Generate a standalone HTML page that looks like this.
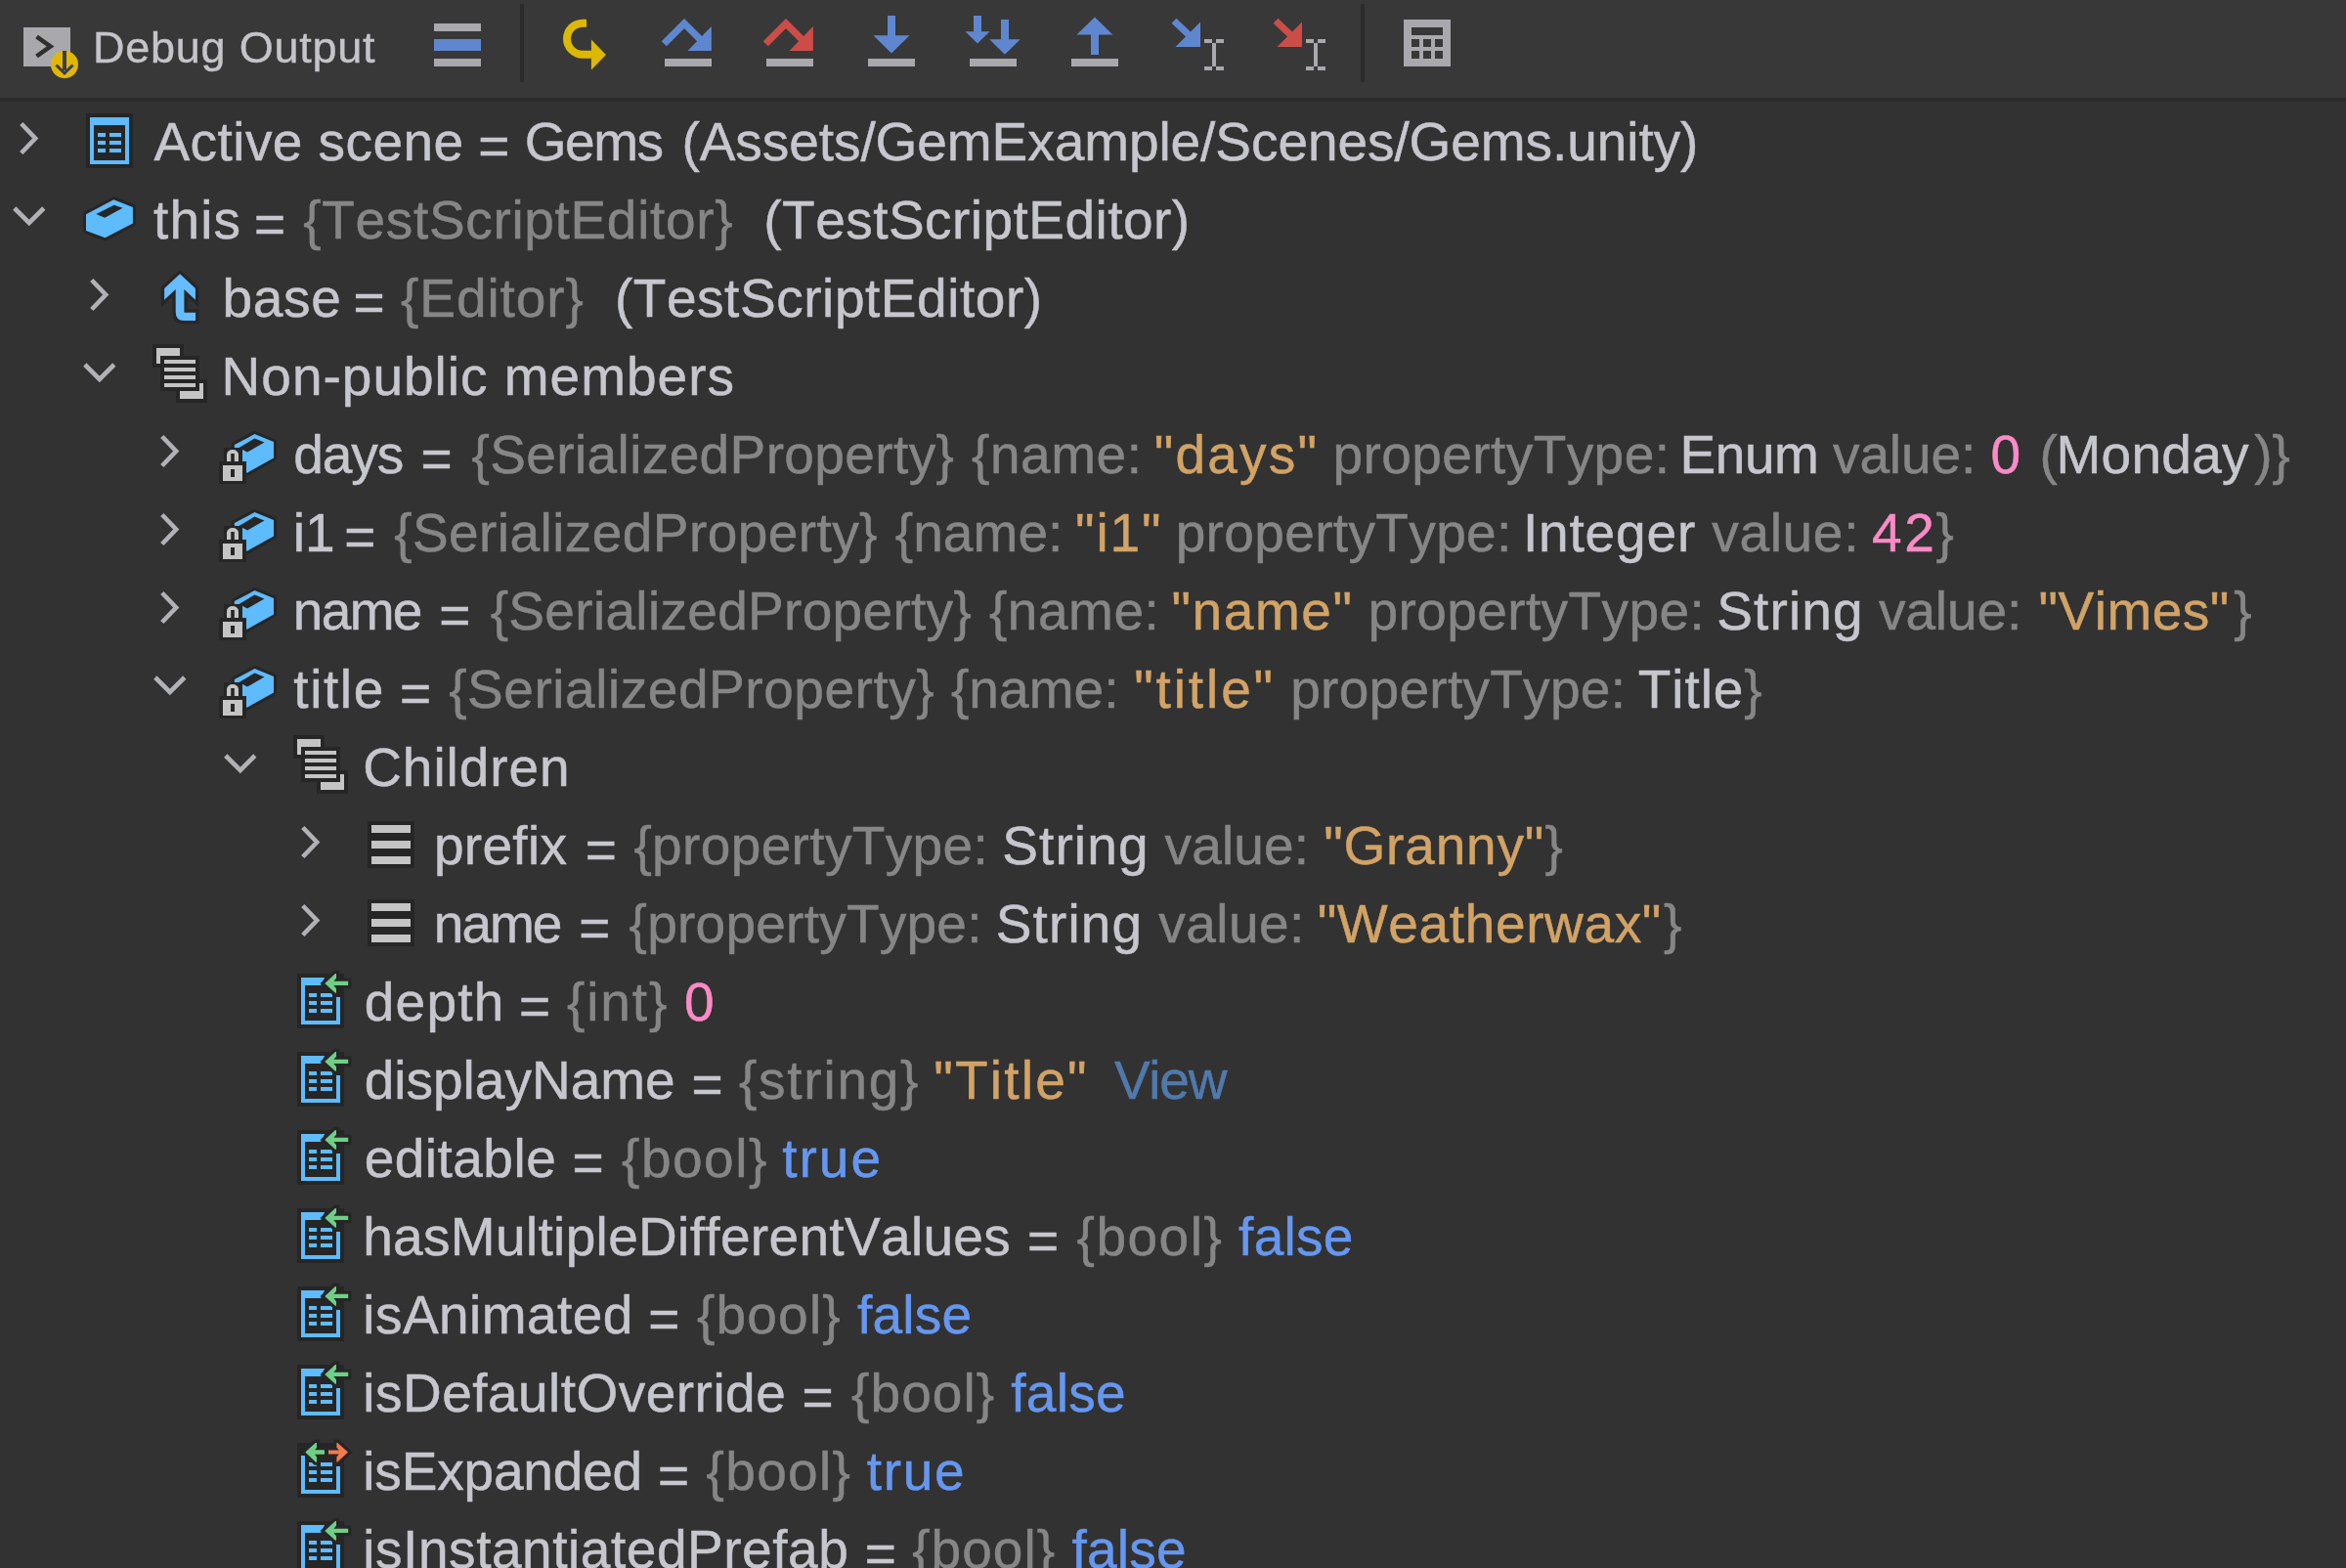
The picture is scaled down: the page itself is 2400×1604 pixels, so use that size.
<!DOCTYPE html>
<html><head><meta charset="utf-8"><title>Debug Output</title>
<style>
html,body{margin:0;padding:0;background:#323232;width:2400px;height:1604px;overflow:hidden;}
.tb0{position:absolute;left:0;top:0;width:2400px;height:100px;background:#383838;}
.tb1{position:absolute;left:0;top:100px;width:2400px;height:4px;background:#2b2b2b;}
.t{position:absolute;font-family:"Liberation Sans",sans-serif;font-size:55px;line-height:80px;height:80px;white-space:pre;font-kerning:none;-webkit-text-stroke:0.5px currentColor;}
.tb{position:absolute;font-family:"Liberation Sans",sans-serif;font-size:45px;line-height:100px;height:100px;white-space:pre;font-kerning:none;will-change:transform;-webkit-text-stroke:0.4px currentColor;}
svg{position:absolute;left:0;top:0;}
</style></head><body>
<div class="tb0"></div><div class="tb1"></div>
<svg width="2400" height="1604" viewBox="0 0 2400 1604">
<rect x="24" y="28" width="48" height="40" fill="#a8a8ad" shape-rendering="crispEdges"/>
<polyline points="37.50,37.50 51.50,47.50 37.50,57.50" fill="none" stroke="#2f2f2f" stroke-width="4.6" stroke-linecap="butt" stroke-linejoin="miter" shape-rendering="geometricPrecision"/>
<circle cx="66" cy="66" r="14" fill="#e0b800"/>
<rect x="64.3" y="52" width="3.4" height="20" fill="#3b3a56" shape-rendering="crispEdges"/>
<polyline points="57.50,66.50 66.00,75.00 74.50,66.50" fill="none" stroke="#3b3a56" stroke-width="3.0" stroke-linecap="butt" stroke-linejoin="miter" shape-rendering="geometricPrecision"/>
<rect x="444" y="24" width="48" height="8" fill="#a8a8ad" shape-rendering="crispEdges"/>
<rect x="444" y="40" width="48" height="12" fill="#5f87cf" shape-rendering="crispEdges"/>
<rect x="444" y="60" width="48" height="8" fill="#a8a8ad" shape-rendering="crispEdges"/>
<rect x="532" y="4" width="4" height="80" fill="#2b2b2b" shape-rendering="crispEdges"/>
<rect x="1392" y="4" width="4" height="80" fill="#2b2b2b" shape-rendering="crispEdges"/>
<path d="M600,19.7 L596,19.7 A20,20 0 0 0 596,59.7 L605,59.7 L605,51.7 L596,51.7 A12,12 0 0 1 596,27.7 L600,27.7 Z" fill="#ddb800"/>
<polygon points="604.90,40.60 619.90,55.90 604.90,71.40" fill="#ddb800" shape-rendering="geometricPrecision" />
<polyline points="679.30,44.70 700.00,24.00 717.00,41.00" fill="none" stroke="#5f87cf" stroke-width="7.2" stroke-linecap="butt" stroke-linejoin="miter" shape-rendering="geometricPrecision"/>
<polygon points="727.80,27.00 727.80,52.00 703.50,52.00" fill="#5f87cf" shape-rendering="geometricPrecision" />
<rect x="680" y="60" width="48" height="8" fill="#a8a8ad" shape-rendering="crispEdges"/>
<polyline points="783.30,44.70 804.00,24.00 821.00,41.00" fill="none" stroke="#cc4d47" stroke-width="7.2" stroke-linecap="butt" stroke-linejoin="miter" shape-rendering="geometricPrecision"/>
<polygon points="831.80,27.00 831.80,52.00 807.50,52.00" fill="#cc4d47" shape-rendering="geometricPrecision" />
<rect x="784" y="60" width="48" height="8" fill="#a8a8ad" shape-rendering="crispEdges"/>
<rect x="908" y="16" width="8" height="21" fill="#5f87cf" shape-rendering="crispEdges"/>
<polygon points="893.50,36.20 930.50,36.20 912.00,54.50" fill="#5f87cf" shape-rendering="geometricPrecision" />
<rect x="888" y="60" width="48" height="8" fill="#a8a8ad" shape-rendering="crispEdges"/>
<rect x="996" y="16" width="8" height="17" fill="#5f87cf" shape-rendering="crispEdges"/>
<polygon points="987.50,32.30 1012.50,32.30 1000.00,44.50" fill="#5f87cf" shape-rendering="geometricPrecision" />
<rect x="1024" y="20" width="8" height="21" fill="#5f87cf" shape-rendering="crispEdges"/>
<polygon points="1012.30,40.30 1043.70,40.30 1028.00,55.80" fill="#5f87cf" shape-rendering="geometricPrecision" />
<rect x="992" y="60" width="48" height="8" fill="#a8a8ad" shape-rendering="crispEdges"/>
<polygon points="1101.50,35.60 1138.30,35.60 1120.00,17.50" fill="#5f87cf" shape-rendering="geometricPrecision" />
<rect x="1116" y="35" width="8" height="21" fill="#5f87cf" shape-rendering="crispEdges"/>
<rect x="1096" y="60" width="48" height="8" fill="#a8a8ad" shape-rendering="crispEdges"/>
<polyline points="1201.00,21.20 1216.00,35.50" fill="none" stroke="#5f87cf" stroke-width="7" stroke-linecap="butt" stroke-linejoin="miter" shape-rendering="geometricPrecision"/>
<polygon points="1228.00,22.50 1228.00,48.00 1202.50,48.00" fill="#5f87cf" shape-rendering="geometricPrecision" />
<rect x="1232" y="40" width="8" height="4" fill="#a8a8ad" shape-rendering="crispEdges"/>
<rect x="1244" y="40" width="8" height="4" fill="#a8a8ad" shape-rendering="crispEdges"/>
<rect x="1240" y="44" width="4" height="24" fill="#a8a8ad" shape-rendering="crispEdges"/>
<rect x="1232" y="68" width="8" height="4" fill="#a8a8ad" shape-rendering="crispEdges"/>
<rect x="1244" y="68" width="8" height="4" fill="#a8a8ad" shape-rendering="crispEdges"/>
<polyline points="1305.00,21.20 1320.00,35.50" fill="none" stroke="#cc4d47" stroke-width="7" stroke-linecap="butt" stroke-linejoin="miter" shape-rendering="geometricPrecision"/>
<polygon points="1332.00,22.50 1332.00,48.00 1306.50,48.00" fill="#cc4d47" shape-rendering="geometricPrecision" />
<rect x="1336" y="40" width="8" height="4" fill="#a8a8ad" shape-rendering="crispEdges"/>
<rect x="1348" y="40" width="8" height="4" fill="#a8a8ad" shape-rendering="crispEdges"/>
<rect x="1344" y="44" width="4" height="24" fill="#a8a8ad" shape-rendering="crispEdges"/>
<rect x="1336" y="68" width="8" height="4" fill="#a8a8ad" shape-rendering="crispEdges"/>
<rect x="1348" y="68" width="8" height="4" fill="#a8a8ad" shape-rendering="crispEdges"/>
<path d="M1436,20 h48 v48 h-48 Z M1444,28 v8 h32 v-8 Z M1444,40 v8 h8 v-8 Z M1456,40 v8 h8 v-8 Z M1468,40 v8 h8 v-8 Z M1444,52 v8 h8 v-8 Z M1456,52 v8 h8 v-8 Z M1468,52 v8 h8 v-8 Z" fill="#a8a8ad" fill-rule="evenodd"/>
<polyline points="21.80,126.50 36.20,141.50 21.80,156.50" fill="none" stroke="#b1b2b5" stroke-width="4.6" stroke-linecap="butt" stroke-linejoin="miter" shape-rendering="geometricPrecision"/>
<rect x="88" y="116" width="48" height="56" fill="#262626" shape-rendering="crispEdges"/>
<rect x="92" y="120" width="40" height="48" fill="#5ebbfc" shape-rendering="crispEdges"/>
<rect x="96" y="128" width="32" height="36" fill="#262626" shape-rendering="crispEdges"/>
<rect x="100" y="136" width="8" height="4" fill="#5ebbfc" shape-rendering="crispEdges"/>
<rect x="112" y="136" width="12" height="4" fill="#5ebbfc" shape-rendering="crispEdges"/>
<rect x="100" y="144" width="8" height="4" fill="#5ebbfc" shape-rendering="crispEdges"/>
<rect x="112" y="144" width="12" height="4" fill="#5ebbfc" shape-rendering="crispEdges"/>
<rect x="100" y="152" width="8" height="4" fill="#5ebbfc" shape-rendering="crispEdges"/>
<rect x="112" y="152" width="12" height="4" fill="#5ebbfc" shape-rendering="crispEdges"/>
<polyline points="14.80,213.00 29.80,228.00 44.80,213.00" fill="none" stroke="#b1b2b5" stroke-width="4.6" stroke-linecap="butt" stroke-linejoin="miter" shape-rendering="geometricPrecision"/>
<polygon points="116.30,204.30 135.90,212.00 135.90,228.40 107.50,243.30 88.00,236.10 88.00,219.20" fill="#5ebbfc" stroke="#262626" stroke-width="6" stroke-linejoin="round" paint-order="stroke"/>
<polygon points="98.40,218.90 116.70,209.70 125.50,212.70 107.20,222.70" fill="#262626" shape-rendering="geometricPrecision" />
<polyline points="93.80,286.50 108.20,301.50 93.80,316.50" fill="none" stroke="#b1b2b5" stroke-width="4.6" stroke-linecap="butt" stroke-linejoin="miter" shape-rendering="geometricPrecision"/>
<path d="M184.1,280.3 L199.9,294.9 L199.9,306.8 L188.4,296.1 L188.4,319.8 L200.1,319.8 L200.1,328 L188,328 Q179.7,328 179.7,319 L179.7,296.1 L168.1,306.8 L168.1,294.9 Z" fill="#66bcfd" stroke="#262626" stroke-width="6.5" stroke-linejoin="miter" paint-order="stroke"/>
<polyline points="86.80,373.00 101.80,388.00 116.80,373.00" fill="none" stroke="#b1b2b5" stroke-width="4.6" stroke-linecap="butt" stroke-linejoin="miter" shape-rendering="geometricPrecision"/>
<rect x="156" y="352" width="32" height="24" fill="#262626" shape-rendering="crispEdges"/>
<rect x="160" y="356" width="24" height="16" fill="#c4c4c4" shape-rendering="crispEdges"/>
<rect x="180" y="388" width="32" height="24" fill="#262626" shape-rendering="crispEdges"/>
<rect x="184" y="392" width="24" height="16" fill="#c4c4c4" shape-rendering="crispEdges"/>
<rect x="164" y="364" width="40" height="36" fill="#262626" shape-rendering="crispEdges"/>
<rect x="168" y="368" width="32" height="4" fill="#c4c4c4" shape-rendering="crispEdges"/>
<rect x="168" y="376" width="32" height="4" fill="#c4c4c4" shape-rendering="crispEdges"/>
<rect x="168" y="384" width="32" height="4" fill="#c4c4c4" shape-rendering="crispEdges"/>
<rect x="168" y="392" width="32" height="4" fill="#c4c4c4" shape-rendering="crispEdges"/>
<polyline points="165.80,446.50 180.20,461.50 165.80,476.50" fill="none" stroke="#b1b2b5" stroke-width="4.6" stroke-linecap="butt" stroke-linejoin="miter" shape-rendering="geometricPrecision"/>
<polygon points="260.50,444.00 280.00,452.00 280.00,468.40 252.80,483.80 239.80,476.50 239.80,455.00" fill="#5ebbfc" stroke="#262626" stroke-width="6" stroke-linejoin="round" paint-order="stroke"/>
<polygon points="244.50,458.00 260.50,448.50 270.50,452.50 253.00,462.50" fill="#262626" shape-rendering="geometricPrecision" />
<rect x="228.5" y="457.7" width="19.2" height="16" fill="#262626" shape-rendering="crispEdges"/>
<rect x="224.3" y="472.4" width="27.3" height="22.9" fill="#262626" shape-rendering="crispEdges"/>
<path d="M232,472 L232,465 A6,5 0 0 1 244,465 L244,472 L239.8,472 L239.8,464.1 L236.2,464.1 L236.2,472 Z" fill="#c4c4c4"/>
<rect x="228" y="476" width="20.1" height="16" fill="#c4c4c4" shape-rendering="crispEdges"/>
<rect x="236.2" y="480.1" width="3.6" height="7.7" fill="#262626" shape-rendering="crispEdges"/>
<polyline points="165.80,526.50 180.20,541.50 165.80,556.50" fill="none" stroke="#b1b2b5" stroke-width="4.6" stroke-linecap="butt" stroke-linejoin="miter" shape-rendering="geometricPrecision"/>
<polygon points="260.50,524.00 280.00,532.00 280.00,548.40 252.80,563.80 239.80,556.50 239.80,535.00" fill="#5ebbfc" stroke="#262626" stroke-width="6" stroke-linejoin="round" paint-order="stroke"/>
<polygon points="244.50,538.00 260.50,528.50 270.50,532.50 253.00,542.50" fill="#262626" shape-rendering="geometricPrecision" />
<rect x="228.5" y="537.7" width="19.2" height="16" fill="#262626" shape-rendering="crispEdges"/>
<rect x="224.3" y="552.4" width="27.3" height="22.9" fill="#262626" shape-rendering="crispEdges"/>
<path d="M232,552 L232,545 A6,5 0 0 1 244,545 L244,552 L239.8,552 L239.8,544.1 L236.2,544.1 L236.2,552 Z" fill="#c4c4c4"/>
<rect x="228" y="556" width="20.1" height="16" fill="#c4c4c4" shape-rendering="crispEdges"/>
<rect x="236.2" y="560.1" width="3.6" height="7.7" fill="#262626" shape-rendering="crispEdges"/>
<polyline points="165.80,606.50 180.20,621.50 165.80,636.50" fill="none" stroke="#b1b2b5" stroke-width="4.6" stroke-linecap="butt" stroke-linejoin="miter" shape-rendering="geometricPrecision"/>
<polygon points="260.50,604.00 280.00,612.00 280.00,628.40 252.80,643.80 239.80,636.50 239.80,615.00" fill="#5ebbfc" stroke="#262626" stroke-width="6" stroke-linejoin="round" paint-order="stroke"/>
<polygon points="244.50,618.00 260.50,608.50 270.50,612.50 253.00,622.50" fill="#262626" shape-rendering="geometricPrecision" />
<rect x="228.5" y="617.7" width="19.2" height="16" fill="#262626" shape-rendering="crispEdges"/>
<rect x="224.3" y="632.4" width="27.3" height="22.9" fill="#262626" shape-rendering="crispEdges"/>
<path d="M232,632 L232,625 A6,5 0 0 1 244,625 L244,632 L239.8,632 L239.8,624.1 L236.2,624.1 L236.2,632 Z" fill="#c4c4c4"/>
<rect x="228" y="636" width="20.1" height="16" fill="#c4c4c4" shape-rendering="crispEdges"/>
<rect x="236.2" y="640.1" width="3.6" height="7.7" fill="#262626" shape-rendering="crispEdges"/>
<polyline points="158.80,693.00 173.80,708.00 188.80,693.00" fill="none" stroke="#b1b2b5" stroke-width="4.6" stroke-linecap="butt" stroke-linejoin="miter" shape-rendering="geometricPrecision"/>
<polygon points="260.50,684.00 280.00,692.00 280.00,708.40 252.80,723.80 239.80,716.50 239.80,695.00" fill="#5ebbfc" stroke="#262626" stroke-width="6" stroke-linejoin="round" paint-order="stroke"/>
<polygon points="244.50,698.00 260.50,688.50 270.50,692.50 253.00,702.50" fill="#262626" shape-rendering="geometricPrecision" />
<rect x="228.5" y="697.7" width="19.2" height="16" fill="#262626" shape-rendering="crispEdges"/>
<rect x="224.3" y="712.4" width="27.3" height="22.9" fill="#262626" shape-rendering="crispEdges"/>
<path d="M232,712 L232,705 A6,5 0 0 1 244,705 L244,712 L239.8,712 L239.8,704.1 L236.2,704.1 L236.2,712 Z" fill="#c4c4c4"/>
<rect x="228" y="716" width="20.1" height="16" fill="#c4c4c4" shape-rendering="crispEdges"/>
<rect x="236.2" y="720.1" width="3.6" height="7.7" fill="#262626" shape-rendering="crispEdges"/>
<polyline points="230.80,773.00 245.80,788.00 260.80,773.00" fill="none" stroke="#b1b2b5" stroke-width="4.6" stroke-linecap="butt" stroke-linejoin="miter" shape-rendering="geometricPrecision"/>
<rect x="300" y="752" width="32" height="24" fill="#262626" shape-rendering="crispEdges"/>
<rect x="304" y="756" width="24" height="16" fill="#c4c4c4" shape-rendering="crispEdges"/>
<rect x="324" y="788" width="32" height="24" fill="#262626" shape-rendering="crispEdges"/>
<rect x="328" y="792" width="24" height="16" fill="#c4c4c4" shape-rendering="crispEdges"/>
<rect x="308" y="764" width="40" height="36" fill="#262626" shape-rendering="crispEdges"/>
<rect x="312" y="768" width="32" height="4" fill="#c4c4c4" shape-rendering="crispEdges"/>
<rect x="312" y="776" width="32" height="4" fill="#c4c4c4" shape-rendering="crispEdges"/>
<rect x="312" y="784" width="32" height="4" fill="#c4c4c4" shape-rendering="crispEdges"/>
<rect x="312" y="792" width="32" height="4" fill="#c4c4c4" shape-rendering="crispEdges"/>
<polyline points="309.80,846.50 324.20,861.50 309.80,876.50" fill="none" stroke="#b1b2b5" stroke-width="4.6" stroke-linecap="butt" stroke-linejoin="miter" shape-rendering="geometricPrecision"/>
<rect x="376" y="840" width="48" height="48" fill="#262626" shape-rendering="crispEdges"/>
<rect x="380" y="844" width="40" height="8" fill="#c4c4c4" shape-rendering="crispEdges"/>
<rect x="380" y="860" width="40" height="8" fill="#c4c4c4" shape-rendering="crispEdges"/>
<rect x="380" y="876" width="40" height="8" fill="#c4c4c4" shape-rendering="crispEdges"/>
<polyline points="309.80,926.50 324.20,941.50 309.80,956.50" fill="none" stroke="#b1b2b5" stroke-width="4.6" stroke-linecap="butt" stroke-linejoin="miter" shape-rendering="geometricPrecision"/>
<rect x="376" y="920" width="48" height="48" fill="#262626" shape-rendering="crispEdges"/>
<rect x="380" y="924" width="40" height="8" fill="#c4c4c4" shape-rendering="crispEdges"/>
<rect x="380" y="940" width="40" height="8" fill="#c4c4c4" shape-rendering="crispEdges"/>
<rect x="380" y="956" width="40" height="8" fill="#c4c4c4" shape-rendering="crispEdges"/>
<rect x="304" y="996" width="48" height="56" fill="#262626" shape-rendering="crispEdges"/>
<path d="M308,1000 L332.1,1000 L328.2,1008 L312,1008 L312,1044 L344,1044 L344,1019.9 L348,1019.9 L348,1048 L308,1048 Z" fill="#5ebbfc"/>
<rect x="316" y="1016" width="8" height="4" fill="#5ebbfc" shape-rendering="crispEdges"/>
<rect x="328" y="1016" width="12" height="4" fill="#5ebbfc" shape-rendering="crispEdges"/>
<rect x="316" y="1024" width="8" height="4" fill="#5ebbfc" shape-rendering="crispEdges"/>
<rect x="328" y="1024" width="12" height="4" fill="#5ebbfc" shape-rendering="crispEdges"/>
<rect x="316" y="1032" width="8" height="4" fill="#5ebbfc" shape-rendering="crispEdges"/>
<rect x="328" y="1032" width="12" height="4" fill="#5ebbfc" shape-rendering="crispEdges"/>
<polygon points="332.30,1006.00 343.00,996.00 344.00,996.00 344.00,1000.80 341.40,1003.80 356.20,1003.80 356.20,1007.90 341.40,1007.90 344.00,1011.20 344.00,1015.80 343.00,1015.80" fill="#70cf86" shape-rendering="geometricPrecision" stroke="#262626" stroke-width="6.5" stroke-linejoin="miter" paint-order="stroke"/>
<rect x="304" y="1076" width="48" height="56" fill="#262626" shape-rendering="crispEdges"/>
<path d="M308,1080 L332.1,1080 L328.2,1088 L312,1088 L312,1124 L344,1124 L344,1099.9 L348,1099.9 L348,1128 L308,1128 Z" fill="#5ebbfc"/>
<rect x="316" y="1096" width="8" height="4" fill="#5ebbfc" shape-rendering="crispEdges"/>
<rect x="328" y="1096" width="12" height="4" fill="#5ebbfc" shape-rendering="crispEdges"/>
<rect x="316" y="1104" width="8" height="4" fill="#5ebbfc" shape-rendering="crispEdges"/>
<rect x="328" y="1104" width="12" height="4" fill="#5ebbfc" shape-rendering="crispEdges"/>
<rect x="316" y="1112" width="8" height="4" fill="#5ebbfc" shape-rendering="crispEdges"/>
<rect x="328" y="1112" width="12" height="4" fill="#5ebbfc" shape-rendering="crispEdges"/>
<polygon points="332.30,1086.00 343.00,1076.00 344.00,1076.00 344.00,1080.80 341.40,1083.80 356.20,1083.80 356.20,1087.90 341.40,1087.90 344.00,1091.20 344.00,1095.80 343.00,1095.80" fill="#70cf86" shape-rendering="geometricPrecision" stroke="#262626" stroke-width="6.5" stroke-linejoin="miter" paint-order="stroke"/>
<rect x="304" y="1156" width="48" height="56" fill="#262626" shape-rendering="crispEdges"/>
<path d="M308,1160 L332.1,1160 L328.2,1168 L312,1168 L312,1204 L344,1204 L344,1179.9 L348,1179.9 L348,1208 L308,1208 Z" fill="#5ebbfc"/>
<rect x="316" y="1176" width="8" height="4" fill="#5ebbfc" shape-rendering="crispEdges"/>
<rect x="328" y="1176" width="12" height="4" fill="#5ebbfc" shape-rendering="crispEdges"/>
<rect x="316" y="1184" width="8" height="4" fill="#5ebbfc" shape-rendering="crispEdges"/>
<rect x="328" y="1184" width="12" height="4" fill="#5ebbfc" shape-rendering="crispEdges"/>
<rect x="316" y="1192" width="8" height="4" fill="#5ebbfc" shape-rendering="crispEdges"/>
<rect x="328" y="1192" width="12" height="4" fill="#5ebbfc" shape-rendering="crispEdges"/>
<polygon points="332.30,1166.00 343.00,1156.00 344.00,1156.00 344.00,1160.80 341.40,1163.80 356.20,1163.80 356.20,1167.90 341.40,1167.90 344.00,1171.20 344.00,1175.80 343.00,1175.80" fill="#70cf86" shape-rendering="geometricPrecision" stroke="#262626" stroke-width="6.5" stroke-linejoin="miter" paint-order="stroke"/>
<rect x="304" y="1236" width="48" height="56" fill="#262626" shape-rendering="crispEdges"/>
<path d="M308,1240 L332.1,1240 L328.2,1248 L312,1248 L312,1284 L344,1284 L344,1259.9 L348,1259.9 L348,1288 L308,1288 Z" fill="#5ebbfc"/>
<rect x="316" y="1256" width="8" height="4" fill="#5ebbfc" shape-rendering="crispEdges"/>
<rect x="328" y="1256" width="12" height="4" fill="#5ebbfc" shape-rendering="crispEdges"/>
<rect x="316" y="1264" width="8" height="4" fill="#5ebbfc" shape-rendering="crispEdges"/>
<rect x="328" y="1264" width="12" height="4" fill="#5ebbfc" shape-rendering="crispEdges"/>
<rect x="316" y="1272" width="8" height="4" fill="#5ebbfc" shape-rendering="crispEdges"/>
<rect x="328" y="1272" width="12" height="4" fill="#5ebbfc" shape-rendering="crispEdges"/>
<polygon points="332.30,1246.00 343.00,1236.00 344.00,1236.00 344.00,1240.80 341.40,1243.80 356.20,1243.80 356.20,1247.90 341.40,1247.90 344.00,1251.20 344.00,1255.80 343.00,1255.80" fill="#70cf86" shape-rendering="geometricPrecision" stroke="#262626" stroke-width="6.5" stroke-linejoin="miter" paint-order="stroke"/>
<rect x="304" y="1316" width="48" height="56" fill="#262626" shape-rendering="crispEdges"/>
<path d="M308,1320 L332.1,1320 L328.2,1328 L312,1328 L312,1364 L344,1364 L344,1339.9 L348,1339.9 L348,1368 L308,1368 Z" fill="#5ebbfc"/>
<rect x="316" y="1336" width="8" height="4" fill="#5ebbfc" shape-rendering="crispEdges"/>
<rect x="328" y="1336" width="12" height="4" fill="#5ebbfc" shape-rendering="crispEdges"/>
<rect x="316" y="1344" width="8" height="4" fill="#5ebbfc" shape-rendering="crispEdges"/>
<rect x="328" y="1344" width="12" height="4" fill="#5ebbfc" shape-rendering="crispEdges"/>
<rect x="316" y="1352" width="8" height="4" fill="#5ebbfc" shape-rendering="crispEdges"/>
<rect x="328" y="1352" width="12" height="4" fill="#5ebbfc" shape-rendering="crispEdges"/>
<polygon points="332.30,1326.00 343.00,1316.00 344.00,1316.00 344.00,1320.80 341.40,1323.80 356.20,1323.80 356.20,1327.90 341.40,1327.90 344.00,1331.20 344.00,1335.80 343.00,1335.80" fill="#70cf86" shape-rendering="geometricPrecision" stroke="#262626" stroke-width="6.5" stroke-linejoin="miter" paint-order="stroke"/>
<rect x="304" y="1396" width="48" height="56" fill="#262626" shape-rendering="crispEdges"/>
<path d="M308,1400 L332.1,1400 L328.2,1408 L312,1408 L312,1444 L344,1444 L344,1419.9 L348,1419.9 L348,1448 L308,1448 Z" fill="#5ebbfc"/>
<rect x="316" y="1416" width="8" height="4" fill="#5ebbfc" shape-rendering="crispEdges"/>
<rect x="328" y="1416" width="12" height="4" fill="#5ebbfc" shape-rendering="crispEdges"/>
<rect x="316" y="1424" width="8" height="4" fill="#5ebbfc" shape-rendering="crispEdges"/>
<rect x="328" y="1424" width="12" height="4" fill="#5ebbfc" shape-rendering="crispEdges"/>
<rect x="316" y="1432" width="8" height="4" fill="#5ebbfc" shape-rendering="crispEdges"/>
<rect x="328" y="1432" width="12" height="4" fill="#5ebbfc" shape-rendering="crispEdges"/>
<polygon points="332.30,1406.00 343.00,1396.00 344.00,1396.00 344.00,1400.80 341.40,1403.80 356.20,1403.80 356.20,1407.90 341.40,1407.90 344.00,1411.20 344.00,1415.80 343.00,1415.80" fill="#70cf86" shape-rendering="geometricPrecision" stroke="#262626" stroke-width="6.5" stroke-linejoin="miter" paint-order="stroke"/>
<rect x="304" y="1476" width="48" height="56" fill="#262626" shape-rendering="crispEdges"/>
<path d="M308,1489 L312,1489 L312,1524 L344,1524 L344,1499.9 L348,1499.9 L348,1528 L308,1528 Z" fill="#5ebbfc"/>
<rect x="316" y="1496" width="8" height="4" fill="#5ebbfc" shape-rendering="crispEdges"/>
<rect x="328" y="1496" width="12" height="4" fill="#5ebbfc" shape-rendering="crispEdges"/>
<rect x="316" y="1504" width="8" height="4" fill="#5ebbfc" shape-rendering="crispEdges"/>
<rect x="328" y="1504" width="12" height="4" fill="#5ebbfc" shape-rendering="crispEdges"/>
<rect x="316" y="1512" width="8" height="4" fill="#5ebbfc" shape-rendering="crispEdges"/>
<rect x="328" y="1512" width="12" height="4" fill="#5ebbfc" shape-rendering="crispEdges"/>
<polygon points="312.50,1485.50 323.00,1476.00 324.00,1476.00 324.00,1480.80 321.60,1483.50 331.80,1483.50 331.80,1487.50 321.60,1487.50 324.00,1490.50 324.00,1495.40 323.00,1495.40" fill="#70cf86" shape-rendering="geometricPrecision" stroke="#262626" stroke-width="6.5" stroke-linejoin="miter" paint-order="stroke"/>
<polygon points="356.00,1485.50 345.40,1476.00 344.40,1476.00 344.40,1480.80 346.80,1483.50 336.00,1483.50 336.00,1487.50 346.80,1487.50 344.40,1490.50 344.40,1495.40 345.40,1495.40" fill="#f27a4f" shape-rendering="geometricPrecision" stroke="#262626" stroke-width="6.5" stroke-linejoin="miter" paint-order="stroke"/>
<polygon points="312.50,1485.50 323.00,1476.00 324.00,1476.00 324.00,1480.80 321.60,1483.50 331.80,1483.50 331.80,1487.50 321.60,1487.50 324.00,1490.50 324.00,1495.40 323.00,1495.40" fill="#70cf86" shape-rendering="geometricPrecision" />
<rect x="304" y="1556" width="48" height="56" fill="#262626" shape-rendering="crispEdges"/>
<path d="M308,1560 L332.1,1560 L328.2,1568 L312,1568 L312,1604 L344,1604 L344,1579.9 L348,1579.9 L348,1608 L308,1608 Z" fill="#5ebbfc"/>
<rect x="316" y="1576" width="8" height="4" fill="#5ebbfc" shape-rendering="crispEdges"/>
<rect x="328" y="1576" width="12" height="4" fill="#5ebbfc" shape-rendering="crispEdges"/>
<rect x="316" y="1584" width="8" height="4" fill="#5ebbfc" shape-rendering="crispEdges"/>
<rect x="328" y="1584" width="12" height="4" fill="#5ebbfc" shape-rendering="crispEdges"/>
<rect x="316" y="1592" width="8" height="4" fill="#5ebbfc" shape-rendering="crispEdges"/>
<rect x="328" y="1592" width="12" height="4" fill="#5ebbfc" shape-rendering="crispEdges"/>
<polygon points="332.30,1566.00 343.00,1556.00 344.00,1556.00 344.00,1560.80 341.40,1563.80 356.20,1563.80 356.20,1567.90 341.40,1567.90 344.00,1571.20 344.00,1575.80 343.00,1575.80" fill="#70cf86" shape-rendering="geometricPrecision" stroke="#262626" stroke-width="6.5" stroke-linejoin="miter" paint-order="stroke"/>
</svg>
<div class="t" style="left:157.49px;top:105px;color:#c6c6cd;letter-spacing:0.439px">Active scene</div>
<div class="t" style="left:489.21px;top:108.5px;color:#c6c6cd;letter-spacing:0.000px">=</div>
<div class="t" style="left:536.83px;top:105px;color:#c6c6cd;letter-spacing:-1.510px">Gems</div>
<div class="t" style="left:697.49px;top:105px;color:#c6c6cd;letter-spacing:-0.066px">(Assets/GemExample/Scenes/Gems.unity)</div>
<div class="t" style="left:156.97px;top:185px;color:#c6c6cd;letter-spacing:1.144px">this</div>
<div class="t" style="left:260.11px;top:188.5px;color:#c6c6cd;letter-spacing:0.000px">=</div>
<div class="t" style="left:310.19px;top:185px;color:#868686;letter-spacing:0.673px">{TestScriptEditor}</div>
<div class="t" style="left:781.29px;top:185px;color:#c6c6cd;letter-spacing:0.468px">(TestScriptEditor)</div>
<div class="t" style="left:227.46px;top:265px;color:#c6c6cd;letter-spacing:0.675px">base</div>
<div class="t" style="left:361.41px;top:268.5px;color:#c6c6cd;letter-spacing:0.000px">=</div>
<div class="t" style="left:410.09px;top:265px;color:#868686;letter-spacing:0.899px">{Editor}</div>
<div class="t" style="left:628.89px;top:265px;color:#c6c6cd;letter-spacing:0.556px">(TestScriptEditor)</div>
<div class="t" style="left:226.59px;top:345px;color:#c6c6cd;letter-spacing:1.000px">Non-public members</div>
<div class="t" style="left:300.19px;top:425px;color:#c6c6cd;letter-spacing:-1.060px">days</div>
<div class="t" style="left:430.51px;top:428.5px;color:#c6c6cd;letter-spacing:0.000px">=</div>
<div class="t" style="left:482.49px;top:425px;color:#868686;letter-spacing:0.384px">{SerializedProperty}</div>
<div class="t" style="left:994.09px;top:425px;color:#868686;letter-spacing:0.521px">{name:</div>
<div class="t" style="left:1180.66px;top:425px;color:#d2a366;letter-spacing:2.250px">&quot;days&quot;</div>
<div class="t" style="left:1363.56px;top:425px;color:#868686;letter-spacing:0.421px">propertyType:</div>
<div class="t" style="left:1718.49px;top:425px;color:#c6c6cd;letter-spacing:-0.413px">Enum</div>
<div class="t" style="left:1875.01px;top:425px;color:#868686;letter-spacing:-0.111px">value:</div>
<div class="t" style="left:2036.45px;top:425px;color:#fa8bc6;letter-spacing:0.000px">0</div>
<div class="t" style="left:2086.59px;top:425px;color:#868686;letter-spacing:0.000px">(</div>
<div class="t" style="left:2103.49px;top:425px;color:#c6c6cd;letter-spacing:0.290px">Monday</div>
<div class="t" style="left:2306.31px;top:425px;color:#868686;letter-spacing:0.000px">)}</div>
<div class="t" style="left:299.72px;top:505px;color:#c6c6cd;letter-spacing:0.000px">i1</div>
<div class="t" style="left:352.21px;top:508.5px;color:#c6c6cd;letter-spacing:0.000px">=</div>
<div class="t" style="left:403.19px;top:505px;color:#868686;letter-spacing:0.431px">{SerializedProperty}</div>
<div class="t" style="left:915.79px;top:505px;color:#868686;letter-spacing:0.061px">{name:</div>
<div class="t" style="left:1100.06px;top:505px;color:#d2a366;letter-spacing:1.906px">&quot;i1&quot;</div>
<div class="t" style="left:1202.66px;top:505px;color:#868686;letter-spacing:0.362px">propertyType:</div>
<div class="t" style="left:1557.92px;top:505px;color:#c6c6cd;letter-spacing:0.843px">Integer</div>
<div class="t" style="left:1751.21px;top:505px;color:#868686;letter-spacing:0.689px">value:</div>
<div class="t" style="left:1915.04px;top:505px;color:#fa8bc6;letter-spacing:2.552px">42</div>
<div class="t" style="left:1980.42px;top:505px;color:#868686;letter-spacing:0.000px">}</div>
<div class="t" style="left:299.75px;top:585px;color:#c6c6cd;letter-spacing:-1.628px">name</div>
<div class="t" style="left:449.31px;top:588.5px;color:#c6c6cd;letter-spacing:0.000px">=</div>
<div class="t" style="left:501.69px;top:585px;color:#868686;letter-spacing:0.316px">{SerializedProperty}</div>
<div class="t" style="left:1011.99px;top:585px;color:#868686;letter-spacing:0.521px">{name:</div>
<div class="t" style="left:1198.56px;top:585px;color:#d2a366;letter-spacing:1.549px">&quot;name&quot;</div>
<div class="t" style="left:1399.46px;top:585px;color:#868686;letter-spacing:0.412px">propertyType:</div>
<div class="t" style="left:1756.30px;top:585px;color:#c6c6cd;letter-spacing:1.113px">String</div>
<div class="t" style="left:1922.01px;top:585px;color:#868686;letter-spacing:-0.111px">value:</div>
<div class="t" style="left:2085.46px;top:585px;color:#d2a366;letter-spacing:0.503px">&quot;Vimes&quot;</div>
<div class="t" style="left:2285.32px;top:585px;color:#868686;letter-spacing:0.000px">}</div>
<div class="t" style="left:300.37px;top:665px;color:#c6c6cd;letter-spacing:1.572px">title</div>
<div class="t" style="left:409.11px;top:668.5px;color:#c6c6cd;letter-spacing:0.000px">=</div>
<div class="t" style="left:459.19px;top:665px;color:#868686;letter-spacing:0.547px">{SerializedProperty}</div>
<div class="t" style="left:972.89px;top:665px;color:#868686;letter-spacing:0.081px">{name:</div>
<div class="t" style="left:1160.16px;top:665px;color:#d2a366;letter-spacing:2.889px">&quot;title&quot;</div>
<div class="t" style="left:1320.26px;top:665px;color:#868686;letter-spacing:0.279px">propertyType:</div>
<div class="t" style="left:1675.76px;top:665px;color:#c6c6cd;letter-spacing:0.944px">Title</div>
<div class="t" style="left:1784.32px;top:665px;color:#868686;letter-spacing:0.000px">}</div>
<div class="t" style="left:371.21px;top:745px;color:#c6c6cd;letter-spacing:0.934px">Children</div>
<div class="t" style="left:443.96px;top:825px;color:#c6c6cd;letter-spacing:0.309px">prefix</div>
<div class="t" style="left:598.71px;top:828.5px;color:#c6c6cd;letter-spacing:0.000px">=</div>
<div class="t" style="left:648.39px;top:825px;color:#868686;letter-spacing:0.365px">{propertyType:</div>
<div class="t" style="left:1025.20px;top:825px;color:#c6c6cd;letter-spacing:1.133px">String</div>
<div class="t" style="left:1191.61px;top:825px;color:#868686;letter-spacing:0.129px">value:</div>
<div class="t" style="left:1354.16px;top:825px;color:#d2a366;letter-spacing:0.823px">&quot;Granny&quot;</div>
<div class="t" style="left:1580.42px;top:825px;color:#868686;letter-spacing:0.000px">}</div>
<div class="t" style="left:443.85px;top:905px;color:#c6c6cd;letter-spacing:-1.995px">name</div>
<div class="t" style="left:592.31px;top:908.5px;color:#c6c6cd;letter-spacing:0.000px">=</div>
<div class="t" style="left:643.59px;top:905px;color:#868686;letter-spacing:0.242px">{propertyType:</div>
<div class="t" style="left:1018.80px;top:905px;color:#c6c6cd;letter-spacing:1.133px">String</div>
<div class="t" style="left:1185.21px;top:905px;color:#868686;letter-spacing:0.469px">value:</div>
<div class="t" style="left:1347.66px;top:905px;color:#d2a366;letter-spacing:0.632px">&quot;Weatherwax&quot;</div>
<div class="t" style="left:1701.92px;top:905px;color:#868686;letter-spacing:0.000px">}</div>
<div class="t" style="left:372.69px;top:985px;color:#c6c6cd;letter-spacing:1.262px">depth</div>
<div class="t" style="left:531.11px;top:988.5px;color:#c6c6cd;letter-spacing:0.000px">=</div>
<div class="t" style="left:579.89px;top:985px;color:#868686;letter-spacing:1.920px">{int}</div>
<div class="t" style="left:700.05px;top:985px;color:#fa8bc6;letter-spacing:0.000px">0</div>
<div class="t" style="left:372.69px;top:1065px;color:#c6c6cd;letter-spacing:0.004px">displayName</div>
<div class="t" style="left:707.51px;top:1068.5px;color:#c6c6cd;letter-spacing:0.000px">=</div>
<div class="t" style="left:755.89px;top:1065px;color:#868686;letter-spacing:1.768px">{string}</div>
<div class="t" style="left:955.26px;top:1065px;color:#d2a366;letter-spacing:2.220px">&quot;Title&quot;</div>
<div class="t" style="left:1139.96px;top:1065px;color:#5079ac;letter-spacing:-1.268px">View</div>
<div class="t" style="left:372.66px;top:1145px;color:#c6c6cd;letter-spacing:0.488px">editable</div>
<div class="t" style="left:585.61px;top:1148.5px;color:#c6c6cd;letter-spacing:0.000px">=</div>
<div class="t" style="left:636.09px;top:1145px;color:#868686;letter-spacing:1.497px">{bool}</div>
<div class="t" style="left:800.27px;top:1145px;color:#6697f0;letter-spacing:2.001px">true</div>
<div class="t" style="left:371.19px;top:1225px;color:#c6c6cd;letter-spacing:0.335px">hasMultipleDifferentValues</div>
<div class="t" style="left:1051.11px;top:1228.5px;color:#c6c6cd;letter-spacing:0.000px">=</div>
<div class="t" style="left:1101.59px;top:1225px;color:#868686;letter-spacing:1.497px">{bool}</div>
<div class="t" style="left:1267.12px;top:1225px;color:#6697f0;letter-spacing:0.236px">false</div>
<div class="t" style="left:371.32px;top:1305px;color:#c6c6cd;letter-spacing:0.450px">isAnimated</div>
<div class="t" style="left:663.21px;top:1308.5px;color:#c6c6cd;letter-spacing:0.000px">=</div>
<div class="t" style="left:712.89px;top:1305px;color:#868686;letter-spacing:1.217px">{bool}</div>
<div class="t" style="left:877.02px;top:1305px;color:#6697f0;letter-spacing:0.236px">false</div>
<div class="t" style="left:371.32px;top:1385px;color:#c6c6cd;letter-spacing:0.471px">isDefaultOverride</div>
<div class="t" style="left:820.61px;top:1388.5px;color:#c6c6cd;letter-spacing:0.000px">=</div>
<div class="t" style="left:871.09px;top:1385px;color:#868686;letter-spacing:1.057px">{bool}</div>
<div class="t" style="left:1034.32px;top:1385px;color:#6697f0;letter-spacing:0.261px">false</div>
<div class="t" style="left:371.32px;top:1465px;color:#c6c6cd;letter-spacing:-0.179px">isExpanded</div>
<div class="t" style="left:672.91px;top:1468.5px;color:#c6c6cd;letter-spacing:0.000px">=</div>
<div class="t" style="left:722.59px;top:1465px;color:#868686;letter-spacing:1.317px">{bool}</div>
<div class="t" style="left:886.67px;top:1465px;color:#6697f0;letter-spacing:1.734px">true</div>
<div class="t" style="left:371.32px;top:1545px;color:#c6c6cd;letter-spacing:0.545px">isInstantiatedPrefab</div>
<div class="t" style="left:884.81px;top:1548.5px;color:#c6c6cd;letter-spacing:0.000px">=</div>
<div class="t" style="left:933.19px;top:1545px;color:#868686;letter-spacing:1.037px">{bool}</div>
<div class="t" style="left:1096.42px;top:1545px;color:#6697f0;letter-spacing:0.261px">false</div>
<div class="tb" style="left:94.81px;top:-1.5px;color:#c4c4c9;letter-spacing:0.757px">Debug Output</div>
</body></html>
